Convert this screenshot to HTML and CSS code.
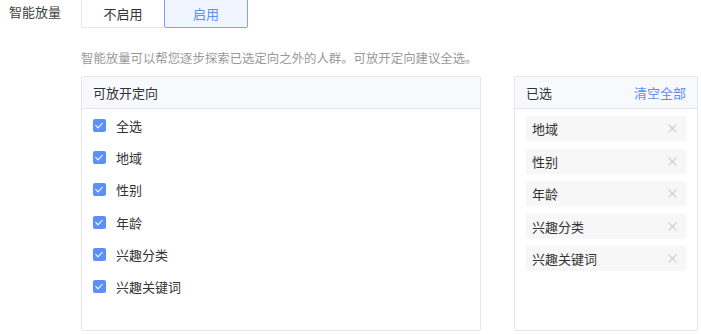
FILE: index.html
```html
<!DOCTYPE html>
<html lang="zh-CN">
<head>
  <meta charset="UTF-8" />
  <title>智能放量</title>
  <link rel="stylesheet" href="styles.css">
</head>
<body>
  <div class="row">
    <div class="row-label">智能放量</div>
    <div class="switch-group">
      <button class="switch-btn">不启用</button>
      <button class="switch-btn active">启用</button>
    </div>
  </div>

  <div class="content">
    <p class="hint">智能放量可以帮您逐步探索已选定向之外的人群。可放开定向建议全选。</p>

    <div class="panels">
      <div class="panel panel-left">
        <div class="panel-head">可放开定向</div>
        <ul class="check-list">
          <li><span class="checkbox"></span>全选</li>
          <li><span class="checkbox"></span>地域</li>
          <li><span class="checkbox"></span>性别</li>
          <li><span class="checkbox"></span>年龄</li>
          <li><span class="checkbox"></span>兴趣分类</li>
          <li><span class="checkbox"></span>兴趣关键词</li>
        </ul>
      </div>

      <div class="panel panel-right">
        <div class="panel-head">
          <span>已选</span>
          <a class="clear-all">清空全部</a>
        </div>
        <ul class="tag-list">
          <li><span>地域</span><span class="remove"></span></li>
          <li><span>性别</span><span class="remove"></span></li>
          <li><span>年龄</span><span class="remove"></span></li>
          <li><span>兴趣分类</span><span class="remove"></span></li>
          <li><span>兴趣关键词</span><span class="remove"></span></li>
        </ul>
      </div>
    </div>
  </div>
</body>
</html>
```

FILE: styles.css
```css
body {
  margin: 0;
  font-family: "Noto Sans CJK SC", "Noto Sans", sans-serif;
  font-size: 13px;
  color: #333;
  background: #fff;
}
ul {
  list-style: none;
  margin: 0;
  padding: 0;
}
.row {
  display: flex;
  margin-top: -1px;
}
.row-label {
  width: 72px;
  padding-left: 9px;
  line-height: 26px;
  color: #444;
}
.switch-group {
  display: flex;
}
.switch-btn {
  width: 84px;
  height: 29px;
  margin: 0;
  padding: 0;
  font-family: inherit;
  font-size: 13px;
  color: #333;
  background: #fff;
  border: 1px solid #e3e6ee;
  border-radius: 0 0 2px 2px;
  cursor: pointer;
}
.switch-btn.active {
  color: #5b8ff9;
  background: #f0f5ff;
  border-color: #7aa5f7;
  margin-left: -1px;
}
.content {
  padding-left: 81px;
}
.hint {
  margin: 21px 0 9px;
  font-size: 12.4px;
  line-height: 18px;
  color: #999;
}
.panels {
  display: flex;
  gap: 33px;
}
.panel {
  height: 253px;
  border: 1px solid #e3e6f0;
  border-radius: 2px;
}
.panel-left {
  width: 398px;
}
.panel-right {
  width: 182px;
}
.panel-head {
  display: flex;
  justify-content: space-between;
  height: 31px;
  line-height: 31px;
  padding: 0 11px;
  background: #f8f9fd;
  border-bottom: 1px solid #e3e6f0;
}
.clear-all {
  color: #5b8ff9;
  cursor: pointer;
}
.check-list {
  padding: 0 11px;
}
.check-list li {
  display: flex;
  align-items: center;
  height: 32.3px;
}
.checkbox {
  position: relative;
  width: 13px;
  height: 13px;
  margin-right: 10px;
  background: #5b8ff9;
  border-radius: 2px;
}
.checkbox::after {
  content: "";
  position: absolute;
  left: 4px;
  top: 2px;
  width: 3px;
  height: 6px;
  border: solid #fff;
  border-width: 0 1.5px 1.5px 0;
  transform: rotate(45deg);
}
.tag-list {
  padding: 7px 11px;
}
.tag-list li {
  display: flex;
  justify-content: space-between;
  align-items: center;
  height: 25px;
  margin-bottom: 7.6px;
  padding: 0 6px;
  background: #f7f7f7;
  color: #333;
}
.remove {
  position: relative;
  width: 11px;
  height: 11px;
  margin-right: 2px;
}
.remove::before,
.remove::after {
  content: "";
  position: absolute;
  left: 0;
  top: 5px;
  width: 11px;
  height: 1px;
  background: #c8c8c8;
  transform: rotate(45deg);
}
.remove::after {
  transform: rotate(-45deg);
}
```
